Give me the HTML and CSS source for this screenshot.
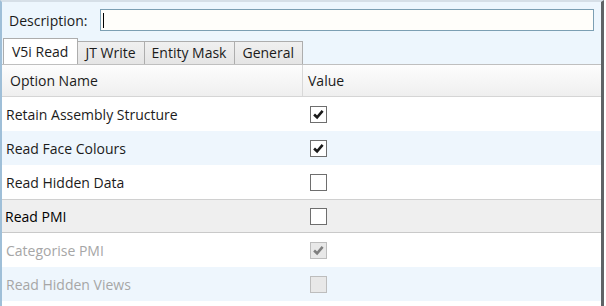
FILE: index.html
```html
<!DOCTYPE html>
<html lang="en">
<head>
  <meta charset="UTF-8" />
  <title>Import Options</title>
  <link rel="stylesheet" href="styles.css">
</head>
<body>
  <div class="window">
    <div class="desc-row">
      <span class="desc-label">Description:</span>
      <div class="desc-input"><span class="caret"></span></div>
    </div>

    <div class="tabs">
      <div class="tab active">V5i Read</div>
      <div class="tab">JT Write</div>
      <div class="tab">Entity Mask</div>
      <div class="tab">General</div>
    </div>

    <div class="grid">
      <div class="row header">
        <div class="cell name">Option Name</div>
        <div class="cell value">Value</div>
      </div>

      <div class="row">
        <div class="cell name">Retain Assembly Structure</div>
        <div class="cell value"><span class="check on"><svg viewBox="0 0 16 16"><path d="M3.3 8 L6.5 11 L12.4 4.2" /></svg></span></div>
      </div>
      <div class="row alt">
        <div class="cell name">Read Face Colours</div>
        <div class="cell value"><span class="check on"><svg viewBox="0 0 16 16"><path d="M3.3 8 L6.5 11 L12.4 4.2" /></svg></span></div>
      </div>
      <div class="row">
        <div class="cell name">Read Hidden Data</div>
        <div class="cell value"><span class="check"></span></div>
      </div>
      <div class="row selected">
        <div class="cell name">Read PMI</div>
        <div class="cell value"><span class="check"></span></div>
      </div>
      <div class="row disabled">
        <div class="cell name">Categorise PMI</div>
        <div class="cell value"><span class="check on"><svg viewBox="0 0 16 16"><path d="M3.3 8 L6.5 11 L12.4 4.2" /></svg></span></div>
      </div>
      <div class="row alt disabled">
        <div class="cell name">Read Hidden Views</div>
        <div class="cell value"><span class="check"></span></div>
      </div>
    </div>
  </div>
</body>
</html>
```

FILE: styles.css
```css
html, body {
  margin: 0;
  padding: 0;
  width: 606px;
  height: 306px;
  overflow: hidden;
}

body {
  background: #fff;
  font-family: "Open Sans", "Noto Sans", sans-serif;
  font-size: 14px;
  color: #1b1b1b;
}

.window {
  height: 306px;
  box-sizing: border-box;
  background: #edf6fd;
  border-top: 2px solid #d6dfe7;
  border-left: 2px solid #9fbfd8;
  border-right: 3px solid #5f6366;
  margin-right: 2px;
  display: flex;
  flex-direction: column;
}

/* description field */
.desc-row {
  display: flex;
  align-items: center;
  height: 36px;
  padding-left: 7px;
}

.desc-label {
  width: 91px;
}

.desc-input {
  width: 492px;
  height: 20px;
  border: 1px solid #7c9fb3;
  background: #fffefa;
  position: relative;
}

.caret {
  position: absolute;
  left: 2px;
  top: 3px;
  width: 1px;
  height: 15px;
  background: #000;
}

/* tabs */
.tabs {
  display: flex;
  align-items: flex-end;
  height: 26px;
  padding-left: 1px;
}

.tab {
  height: 23px;
  line-height: 22px;
  box-sizing: border-box;
  padding: 0 8px 0 7px;
  border: 1px solid #adadad;
  border-bottom: none;
  border-left: none;
  background: linear-gradient(#f0f0f0, #e5e5e5);
}

.tab.active {
  height: 26px;
  line-height: 25px;
  background: #fff;
  border-left: 1px solid #adadad;
  padding: 0 9px 0 8px;
}

/* grid */
.grid {
  flex: 1;
  background: #fff;
}

.row {
  display: flex;
  height: 34px;
  align-items: center;
  box-sizing: border-box;
}

.row.header {
  height: 33px;
  background: linear-gradient(#fdfdfd, #efefef);
  border-top: 1px solid #bfbfbf;
  border-bottom: 1px solid #d5d5d5;
}

.row.header .name {
  padding-left: 8px;
  border-right: 1px solid #d8d8d8;
  height: 100%;
  display: flex;
  align-items: center;
}

.row.header .value {
  padding-left: 5px;
}

.row.alt {
  background: #eef6fd;
}

.row.selected {
  background: #efefef;
  border-top: 1px solid #d0d0d0;
  border-bottom: 1px solid #c9c9c9;
  color: #000;
}

.row.selected .name {
  padding-left: 3px;
}

.row.disabled {
  color: #a6a6a6;
}

.cell.name {
  width: 301px;
  padding-left: 4px;
  box-sizing: border-box;
  white-space: nowrap;
}

.cell.value {
  padding-left: 7px;
  display: flex;
  align-items: center;
}

.check {
  width: 17px;
  height: 17px;
  box-sizing: border-box;
  border: 1px solid #6e6e6e;
  background: #fff;
  display: block;
}

.check svg {
  display: block;
  width: 15px;
  height: 15px;
}

.check path {
  fill: none;
  stroke: #1a1a1a;
  stroke-width: 2.8;
}

.disabled .check {
  border-color: #bdbdbd;
  background: #e8e8e8;
}

.disabled .check path {
  stroke: #7f7f7f;
}
```
